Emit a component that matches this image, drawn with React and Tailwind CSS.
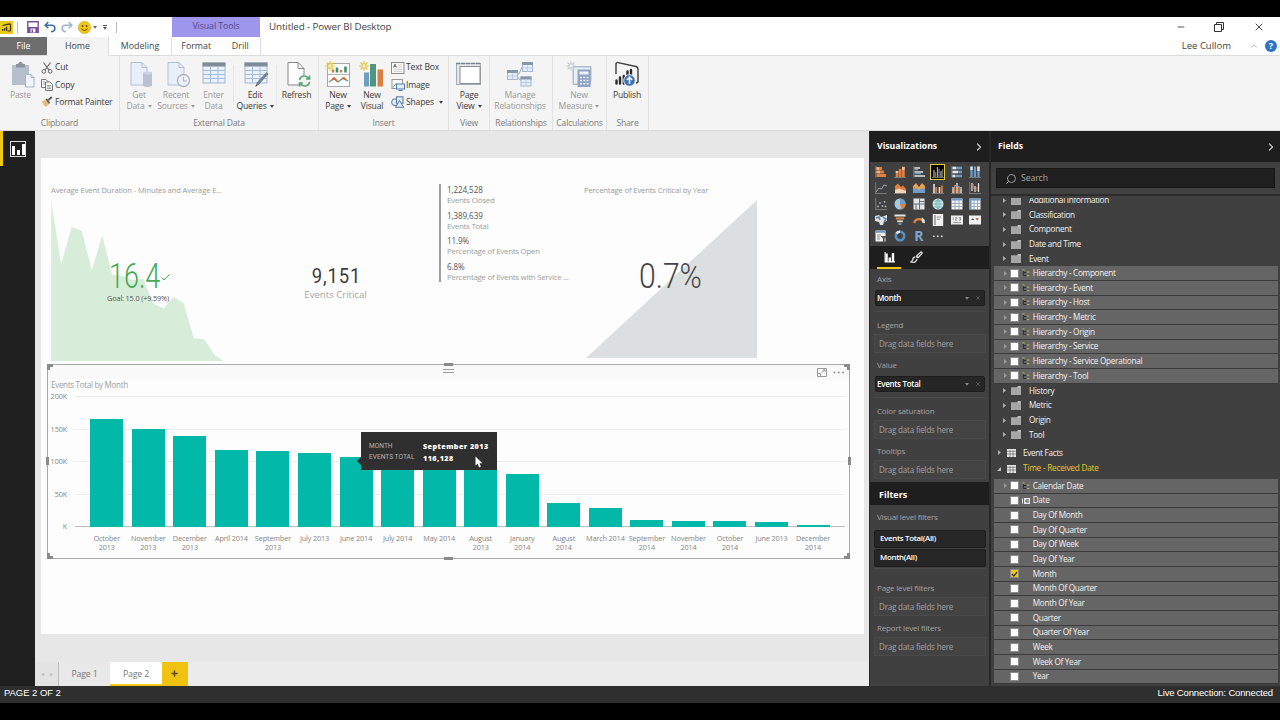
import { ChevronRight, ChevronUp, Search, Minus, X, Plus } from "lucide-react";

const months = [
  { label: "October 2013", top: 108.5, wrap: true },
  { label: "November 2013", top: 97.7, wrap: true },
  { label: "December 2013", top: 91.5, wrap: true },
  { label: "April 2014", top: 77 },
  { label: "September 2013", top: 75.7, wrap: true },
  { label: "July 2013", top: 73.7 },
  { label: "June 2014", top: 70.5 },
  { label: "July 2014", top: 68 },
  { label: "May 2014", top: 66 },
  { label: "August 2013", top: 64, wrap: true },
  { label: "January 2014", top: 53.5, wrap: true },
  { label: "August 2014", top: 24.5, wrap: true },
  { label: "March 2014", top: 19.5 },
  { label: "September 2014", top: 6.6, wrap: true },
  { label: "November 2014", top: 6.3, wrap: true },
  { label: "October 2014", top: 6.2, wrap: true },
  { label: "June 2013", top: 4.6 },
  { label: "December 2014", top: 1.8, wrap: true },
];

const fields = [
  { type: "folder", name: "Additional Information" },
  { type: "folder", name: "Classification" },
  { type: "folder", name: "Component" },
  { type: "folder", name: "Date and Time" },
  { type: "folder", name: "Event" },
  { type: "hierarchy", name: "Hierarchy - Component" },
  { type: "hierarchy", name: "Hierarchy - Event" },
  { type: "hierarchy", name: "Hierarchy - Host" },
  { type: "hierarchy", name: "Hierarchy - Metric" },
  { type: "hierarchy", name: "Hierarchy - Origin" },
  { type: "hierarchy", name: "Hierarchy - Service" },
  { type: "hierarchy", name: "Hierarchy - Service Operational" },
  { type: "hierarchy", name: "Hierarchy - Tool" },
  { type: "folder", name: "History" },
  { type: "folder", name: "Metric" },
  { type: "folder", name: "Origin" },
  { type: "folder", name: "Tool" },
];

const timeFields = [
  { type: "hierarchy", name: "Calendar Date" },
  { type: "key", name: "Date" },
  { type: "field", name: "Day Of Month" },
  { type: "field", name: "Day Of Quarter" },
  { type: "field", name: "Day Of Week" },
  { type: "field", name: "Day Of Year" },
  { type: "field", name: "Month", checked: true },
  { type: "field", name: "Month Of Quarter" },
  { type: "field", name: "Month Of Year" },
  { type: "field", name: "Quarter" },
  { type: "field", name: "Quarter Of Year" },
  { type: "field", name: "Week" },
  { type: "field", name: "Week Of Year" },
  { type: "field", name: "Year" },
];

/* ---------- quick access toolbar ---------- */

const LogoIcon = () => (
  <svg width="13" height="13" viewBox="0 0 13 13" className="shrink-0">
    <rect width="13" height="13" fill="#e9cb1c" />
    <path d="M2.5 4.5 L9.5 2.8 Q10.5 2.8 10.5 4 V9 Q10.5 10 9.5 10 H7.5" fill="none" stroke="#3a3208" strokeWidth="1.2" />
    <path d="M2.6 9.8 V8 M4.6 9.8 V7 M6.6 9.8 V5.8" stroke="#3a3208" strokeWidth="1.3" />
  </svg>
);

const SaveIcon = () => (
  <svg width="12" height="12" viewBox="0 0 12 12">
    <path d="M0.8 0.8 H11.2 V11.2 H0.8 Z" fill="#fff" stroke="#7b4fa0" strokeWidth="1.4" />
    <rect x="1" y="6" width="10" height="5.3" fill="#7b4fa0" />
    <rect x="3.6" y="7.6" width="4.8" height="3.8" fill="#fff" />
    <rect x="4.6" y="8.5" width="1.5" height="2.9" fill="#7b4fa0" />
  </svg>
);

const UndoIcon = ({ redo }) => (
  <svg width="12" height="12" viewBox="0 0 12 12" className={redo ? "-scale-x-100" : ""}>
    <path
      d="M4.3 1 L1.2 4.2 L4.3 7.2 M1.5 4.2 H7.4 Q10.9 4.2 10.9 7.3 Q10.9 10.6 7 10.8"
      fill="none"
      stroke={redo ? "#9fb4c8" : "#3a6ea5"}
      strokeWidth="1.6"
    />
  </svg>
);

const SmileIcon = () => (
  <svg width="13" height="13" viewBox="0 0 13 13">
    <circle cx="6.5" cy="6.5" r="6" fill="#f2c811" stroke="#d6a90c" strokeWidth="0.8" />
    <circle cx="4.5" cy="5" r="0.9" fill="#5a4200" />
    <circle cx="8.5" cy="5" r="0.9" fill="#5a4200" />
    <path d="M3.3 7.6 Q6.5 11.2 9.7 7.6" fill="none" stroke="#5a4200" strokeWidth="1" />
  </svg>
);

const Caret = ({ className = "" }) => (
  <svg width="4" height="3" viewBox="0 0 4 3" className={`inline-block shrink-0 ${className}`}>
    <path d="M0 0 H4 L2 2.8 Z" fill="currentColor" />
  </svg>
);

/* ---------- ribbon icons ---------- */

const PasteIcon = () => (
  <svg width="24" height="28" viewBox="0 0 24 28" className="ml-[5px]">
    <rect x="1" y="4" width="17" height="20" fill="#b5bfcd" />
    <path d="M5 3 H7 Q9.5 -1.5 12 3 H14 V6.5 H5 Z" fill="#8d939c" />
    <path d="M14.5 13.5 H20 L23 16.5 V26 H14.5 Z" fill="#f0f5fd" stroke="#9fb3d0" />
    <path d="M20 13.5 V16.5 H23" fill="none" stroke="#9fb3d0" />
  </svg>
);

const GetDataIcon = () => (
  <svg width="23" height="28" viewBox="0 0 23 28" className="ml-[5px]">
    <path d="M1 1.5 H12 L17 6.5 V24 H1 Z" fill="#e8effa" stroke="#b3bfd2" />
    <path d="M12 1.5 V6.5 H17" fill="none" stroke="#b3bfd2" />
    <path d="M13 12 Q17.5 9.5 22 12 V25 Q17.5 27 13 25 Z" fill="#b9c2d3" />
    <ellipse cx="17.5" cy="12" rx="4.5" ry="1.4" fill="#ccd4e2" />
  </svg>
);

const RecentIcon = () => (
  <svg width="24" height="28" viewBox="0 0 24 28" className="ml-[5px]">
    <path d="M1 1.5 H12 L17 6.5 V24 H1 Z" fill="#e8effa" stroke="#b3bfd2" />
    <path d="M12 1.5 V6.5 H17" fill="none" stroke="#b3bfd2" />
    <circle cx="16.5" cy="19.5" r="6" fill="#f0f2f6" stroke="#a9b3c2" strokeWidth="1.3" />
    <path d="M16.5 16 V20 H20" fill="none" stroke="#a9b3c2" strokeWidth="1.2" />
  </svg>
);

const TableIcon = ({ pencil }) => (
  <svg width="25" height="28" viewBox="0 0 25 28" className="ml-[2px]">
    <rect x="1" y="2" width="22" height="20" fill="#e9f1fc" stroke="#a3b7d2" />
    <rect x="0.5" y="1.5" width="23" height="4" fill="#808b98" />
    <path d="M1 9.5 H23 M1 13.5 H23 M1 17.5 H23 M8.5 5 V22 M16 5 V22" stroke="#a3bbdc" />
    {pencil && (
      <>
        <path d="M22.5 11 L24.5 13 L15 23.5 L11.5 25.5 L12.8 21.5 Z" fill="#76818d" />
        <path d="M12.2 23.5 L11.3 25.7 L13.4 24.8 Z" fill="#454b52" />
      </>
    )}
  </svg>
);

const RefreshIcon = () => (
  <svg width="24" height="28" viewBox="0 0 24 28" className="ml-[5px]">
    <path d="M1 1.5 H11 L17 7.5 V24 H1 Z" fill="#fff" stroke="#858585" />
    <path d="M11 1.5 V7.5 H17" fill="none" stroke="#858585" />
    <circle cx="17.5" cy="20" r="6" fill="#f3f3f3" />
    <path d="M12.5 19 Q13.5 15 17.5 15 Q20 15 21.5 17.3 M22.5 14.5 V18 H19" fill="none" stroke="#5ba577" strokeWidth="1.7" />
    <path d="M22.8 21 Q21.5 25 17.5 25 Q15 25 13.6 22.7 M12.5 25.5 V22 H16" fill="none" stroke="#5ba577" strokeWidth="1.7" />
  </svg>
);

const Sparkle = ({ faded }) => (
  <g stroke={faded ? "#c9cdd2" : "#e3c84f"} strokeWidth="1.1">
    <path d="M5 0 V10 M0 5 H10 M1.5 1.5 L8.5 8.5 M8.5 1.5 L1.5 8.5" />
    <circle cx="5" cy="5" r="2.2" fill={faded ? "#eceef1" : "#fbf3c4"} />
  </g>
);

const NewPageIcon = () => (
  <svg width="26" height="28" viewBox="0 0 26 28">
    <rect x="2.5" y="2.5" width="22" height="23" fill="#fff" stroke="#a9a9a9" />
    <path d="M3 13.5 H24" stroke="#b5b5b5" />
    <path d="M8 11.5 V8.5 M16 11.5 V9" stroke="#d07a3c" strokeWidth="2.4" />
    <path d="M12 11.5 V6.5 M20.5 11.5 V5.5" stroke="#3f9070" strokeWidth="2.6" />
    <path d="M4 21 L9 17.5 L13 21 L18 17 L23 20" fill="none" stroke="#4f9a83" strokeWidth="1.2" />
    <path d="M7 19 L9 17 L12 20 M17 18 L19 17 L21 19" fill="none" stroke="#cf6c3f" strokeWidth="1.8" />
    <Sparkle />
  </svg>
);

const NewVisualIcon = () => (
  <svg width="25" height="28" viewBox="0 0 25 28" className="-ml-[2px]">
    <rect x="5" y="11.5" width="5" height="14" fill="#6f9fc0" />
    <rect x="11" y="3" width="6" height="22.5" fill="#4f9580" />
    <rect x="18.5" y="8.5" width="5.5" height="17" fill="#d98045" />
    <Sparkle />
  </svg>
);

const PageViewIcon = () => (
  <svg width="26" height="28" viewBox="0 0 26 28">
    <rect x="0.5" y="2.5" width="24" height="21" fill="#e4e6e8" stroke="#a5acb3" />
    <rect x="4" y="5.5" width="20" height="17" fill="#fff" stroke="#868d94" />
    <path d="M0 2.5 H25" stroke="#7b858f" strokeWidth="1.5" strokeDasharray="4 1" />
  </svg>
);

const RelationshipsIcon = () => (
  <svg width="28" height="28" viewBox="0 0 28 28">
    <path d="M10 13 H13 L16 6 H19 M10 14 L14 19 H16" fill="none" stroke="#9caab8" />
    {[[16.5, 1.5], [1.5, 9.5], [15, 16]].map(([x, y]) => (
      <g key={x}>
        <rect x={x} y={y} width="10" height="9" fill="#e6eefa" stroke="#a0b6d4" />
        <rect x={x - 0.5} y={y - 0.5} width="11" height="3" fill="#8797aa" />
        <path d={`M${x} ${y + 5.5} H${x + 10} M${x + 5} ${y + 3} V${y + 9}`} stroke="#b9cbe3" />
      </g>
    ))}
  </svg>
);

const MeasureIcon = () => (
  <svg width="26" height="28" viewBox="0 0 26 28">
    <path d="M7 5.5 H25 V20 H17 M7 8 V23.5 H12" fill="none" stroke="#b2bccb" />
    <rect x="7.5" y="6" width="17" height="17" fill="#e9f0fa" stroke="#b2bccb" />
    <rect x="11.5" y="8.5" width="13" height="17.5" fill="#8fa3c4" />
    <rect x="13.5" y="10.5" width="9" height="3" fill="#f0f4fa" />
    <path d="M14 16.5 H22.5 M14 19.5 H22.5 M14 22.8 H22.5" stroke="#e9f0fa" strokeWidth="1.6" strokeDasharray="2 1.3" />
    <Sparkle faded />
  </svg>
);

const PublishIcon = () => (
  <svg width="26" height="28" viewBox="0 0 26 28">
    <path d="M2 13 V3 Q2 1.2 4 1.6 L22 5.5 Q24 6 24 8 V20 Q24 22 22 22" fill="none" stroke="#3e3e3e" strokeWidth="1.4" />
    <path d="M2.5 22.5 V19.5 M6 22.5 V16.5 M9.8 22.5 V15 M13.5 15 V10.5 M17 13 V9" stroke="#2b2b2b" strokeWidth="2.4" strokeLinecap="round" />
    <circle cx="15.5" cy="19.5" r="5.8" fill="#3d74b8" stroke="#f3f3f3" />
    <path d="M15.5 23 V16.5 M12.8 19 L15.5 16.3 L18.2 19" fill="none" stroke="#fff" strokeWidth="1.5" />
  </svg>
);

const CutIcon = () => (
  <svg width="12" height="12" viewBox="0 0 12 12" fill="none" stroke="#666">
    <path d="M2.5 0.5 L8 8 M9.5 0.5 L4 8" strokeWidth="1.2" />
    <circle cx="2.8" cy="9.4" r="1.8" />
    <circle cx="9.2" cy="9.4" r="1.8" />
  </svg>
);

const CopyIcon = () => (
  <svg width="12" height="12" viewBox="0 0 12 12" fill="#f8f8f8" stroke="#777">
    <path d="M0.5 0.5 H5 L7 2.5 V8.5 H0.5 Z" />
    <path d="M4.5 3 H9 L11.5 5.5 V11.5 H4.5 Z" />
    <path d="M6 6.5 H10 M6 8 H10 M6 9.6 H10 M2 3 H4 M2 5 H4" strokeWidth="0.7" />
  </svg>
);

const PainterIcon = () => (
  <svg width="12" height="12" viewBox="0 0 12 12">
    <path d="M1 5.5 L4.5 3.5 L8 8 L5 11 Q2 9.5 1 5.5 Z" fill="#e8bd7a" />
    <path d="M4.5 3.5 L6 2.5 L9 6.5 L8 8 Z" fill="#555" />
    <path d="M7.5 4 L10.8 1" stroke="#555" strokeWidth="1.8" />
  </svg>
);

const TextBoxIcon = () => (
  <svg width="14" height="12" viewBox="0 0 14 12">
    <rect x="0.5" y="0.5" width="12.5" height="11" fill="#fafafa" stroke="#8c8c8c" />
    <path d="M2.5 5.5 L4 2 L5.5 5.5 M3 4.4 H5" fill="none" stroke="#555" strokeWidth="0.8" />
    <path d="M7 3 H11 M7 5 H11 M2.5 7.3 H11 M2.5 9.3 H11" stroke="#c5c5c5" strokeWidth="0.8" />
  </svg>
);

const ImageIcon = () => (
  <svg width="14" height="12" viewBox="0 0 14 12">
    <rect x="1" y="0.5" width="10.5" height="9" fill="#fafafa" stroke="#9a9a9a" />
    <path d="M2 8.5 L5 4.5 L7 7 L9 5" fill="none" stroke="#888" />
    <rect x="5.5" y="5" width="8" height="5" fill="#e5effa" stroke="#4b7fb5" />
    <path d="M7.5 11.5 H11.5" stroke="#4b7fb5" />
  </svg>
);

const ShapesIcon = () => (
  <svg width="14" height="12" viewBox="0 0 14 12" fill="#dfeaf6" stroke="#55799f">
    <circle cx="4" cy="6.2" r="3.4" />
    <rect x="5.5" y="0.8" width="6.5" height="6.5" />
    <path d="M8.5 4.5 L12.8 11.3 H4.5 Z" />
  </svg>
);

/* ---------- visualization gallery ---------- */

const O = "#e0803c";
const B = "#6f9cc4";
const W = "#e4e4e4";
const axis = <path d="M0.8 0 V11.5" stroke="#8a8a8a" strokeWidth="0.8" />;
const baseline = <path d="M0 11.5 H12" stroke="#8a8a8a" strokeWidth="0.8" />;

const gallery = [
  <>{axis}<path d="M1.5 2.5 H7 M1.5 6 H9 M1.5 9.5 H11" stroke={O} strokeWidth="2.8" /><path d="M1.5 2.5 H4 M1.5 6 H5" stroke="#f0b48a" strokeWidth="2.4" /></>,
  <>{baseline}<path d="M3 11 V5 M6.2 11 V3 M9.4 11 V0.8" stroke={O} strokeWidth="2.7" /><path d="M3 7 V5 M9.4 4 V1" stroke="#f3c7a6" strokeWidth="2.3" /></>,
  <>{axis}<path d="M1.5 2 H7 M1.5 6 H10 M1.5 10 H12" stroke={W} strokeWidth="1.6" /><path d="M1.5 3.5 H5 M1.5 7.5 H8" stroke={B} strokeWidth="1.4" /></>,
  <>{baseline}<path d="M2 11 V4 M5.5 11 V1 M9 11 V5" stroke="#aaa" strokeWidth="1.3" /><path d="M3.6 11 V6 M7.1 11 V3 M10.6 11 V3" stroke="#666" strokeWidth="1.3" /></>,
  <>{axis}<path d="M1.5 2 H11 M1.5 6 H11 M1.5 10 H11" stroke={B} strokeWidth="2.4" /><path d="M1.5 2 H5 M1.5 6 H7 M1.5 10 H4" stroke={W} strokeWidth="2.4" /></>,
  <>{baseline}<path d="M2.5 11 V0.5 M6 11 V0.5 M9.5 11 V0.5" stroke={B} strokeWidth="2.3" /><path d="M2.5 4 V0.5 M9.5 5 V0.5" stroke={W} strokeWidth="2.3" /></>,
  <>{axis}{baseline}<path d="M1 10 L4 6 L6.5 7 L9 3 L12 4" fill="none" stroke="#a7b1bb" strokeWidth="0.9" /></>,
  <>{baseline}<path d="M1 11 V4 L4 1.5 L7 5 L9 3.5 L12 7 V11 Z" fill={O} /><path d="M1 11 V8 L5 6.5 L12 9 V11 Z" fill="#f4d3b8" /></>,
  <><path d="M0 11 V4 L3 1 L6 5 L9 1 L12 4 V11 Z" fill="#e8a052" /><path d="M0 11 V7 Q3 5 6 8 Q9 5 12 7 V11 Z" fill={B} /></>,
  <>{baseline}<path d="M2 11 V2 M7.5 11 V5" stroke={W} strokeWidth="1.6" /><path d="M4.2 11 V5 M10 11 V3.5" stroke={O} strokeWidth="1.7" /></>,
  <>{baseline}<path d="M2 11 V5 M6 11 V1 M10 11 V5" stroke={W} strokeWidth="1.4" /><path d="M3.7 11 V3 M8 11 V4" stroke={O} strokeWidth="1.5" /><path d="M1 7 L5 3 L11 7" fill="none" stroke={B} /></>,
  <>{axis}{baseline}<path d="M3 9 V1 M6 10 V4 M9.5 10 V1" stroke={W} strokeWidth="1.2" /><path d="M4.2 2 V7 M8 5 V9" stroke="#c8624c" strokeWidth="1.2" /></>,
  <>{axis}{baseline}<g fill="#a9b4be"><circle cx="3" cy="8.5" r="0.9" /><circle cx="5" cy="5" r="0.9" /><circle cx="7.5" cy="8" r="0.9" /><circle cx="9.5" cy="4" r="0.9" /><circle cx="10.5" cy="8.5" r="0.9" /></g></>,
  <><circle cx="6" cy="6" r="5.5" fill="#a9c6e0" /><path d="M6 6 V0.5 A5.5 5.5 0 0 1 11.5 6 Z" fill={B} /><path d="M6 6 H11.5 A5.5 5.5 0 0 1 7.5 11.3 Z" fill={O} /></>,
  <><rect x="0.5" y="0.5" width="11" height="11" fill={W} /><path d="M6.5 0.5 V11.5 M0.5 6 H11.5 M3 6 V11.5 M6.5 3.5 H11.5" stroke="#65717d" /></>,
  <><circle cx="6" cy="6" r="5.5" fill="#d9ecec" /><path d="M0.5 6 H11.5 M6 0.5 V11.5 M6 0.5 Q1.5 6 6 11.5 M6 0.5 Q10.5 6 6 11.5 M1.5 3 H10.5 M1.5 9 H10.5" fill="none" stroke="#5fa7ac" strokeWidth="0.7" /></>,
  <><rect x="0.5" y="0.5" width="11" height="11" fill="#f1f1f1" /><path d="M0.5 1.5 H11.5" stroke={B} strokeWidth="2" /><path d="M0.5 5.5 H11.5 M0.5 8.5 H11.5 M4 2 V11.5 M8 2 V11.5" stroke="#8ea2b6" strokeWidth="0.8" /></>,
  <><rect x="0.5" y="0.5" width="11" height="11" fill="#f1f1f1" /><path d="M0.5 1.5 H11.5 M1.5 1 V11.5" stroke={B} strokeWidth="2" /><path d="M0.5 5.5 H11.5 M0.5 8.5 H11.5 M5 2 V11.5 M8.5 2 V11.5" stroke="#8ea2b6" strokeWidth="0.8" /></>,
  <><path d="M0 2 L4 1 L6 3 L12 1 V7 L9 8 L8 11 H5 L4 8 L0 7 Z" fill={W} /><path d="M1 4 L4 3 L5 6 M8 3 L11 5 L9 8" fill="none" stroke="#4f87ba" strokeWidth="1.6" /></>,
  <><path d="M0.5 1.5 H11.5" stroke={W} strokeWidth="2" /><path d="M1.8 4.5 H10.2" stroke={O} strokeWidth="2" /><path d="M3.2 7.3 H8.8" stroke={W} strokeWidth="1.8" /><path d="M4.6 10 H7.4" stroke={B} strokeWidth="2" /></>,
  <><path d="M1.3 9 A4.8 4.8 0 0 1 10.7 9" fill="none" stroke={O} strokeWidth="2.4" /><path d="M8.6 4.5 A4.8 4.8 0 0 1 10.7 9" fill="none" stroke={W} strokeWidth="2.4" /></>,
  <><rect x="0.8" y="0" width="10.4" height="12" fill="#f1f1f1" /><path d="M3 1 V11" stroke="#666" /><path d="M4.8 3 H9 M4.8 5.2 H8" stroke="#888" strokeWidth="0.9" /></>,
  <><rect x="0" y="1.5" width="12" height="9" fill="#f1f1f1" /><path d="M2.2 3.2 V6.2 M4.2 3.5 H5.8 V4.8 H4.3 V6.2 H6 M7.8 3.5 H9.6 V6.2 H7.8 M8.3 4.8 H9.5 M2 8.6 H10" fill="none" stroke="#7a7a7a" strokeWidth="0.7" /></>,
  <><rect x="0" y="1.5" width="12" height="9" fill="#f1f1f1" /><path d="M2 6 L3.8 4.2 L5.6 6 Z" fill="#555" /><path d="M6.5 4.2 H10 L8.2 6.5 Z" fill="#c0453a" /></>,
  <><rect x="0.5" y="0.5" width="10" height="11" fill="#f1f1f1" /><path d="M0.5 1.8 H10.5" stroke={B} strokeWidth="2" /><path d="M2 5 H6 M2 7 H5 M2 9 H5" stroke="#888" strokeWidth="0.9" /><path d="M5.5 6 H12 L9.6 8.8 V12 H8 V8.8 Z" fill="#555" /></>,
  <><circle cx="6" cy="6" r="4.2" fill="none" stroke="#5b8fc0" strokeWidth="2.6" /><path d="M2.5 3.6 A4.2 4.2 0 0 1 6 1.8" fill="none" stroke={W} strokeWidth="2.6" /></>,
];

const BarsGlyph = ({ size = 12 }) => (
  <svg width={size} height={size} viewBox="0 0 12 12">
    <path d="M1.2 0 V10.8 H12" fill="none" stroke="#eee" strokeWidth="1.2" />
    <path d="M2.8 11 V1.5 M6.3 11 V6 M9.8 11 V1" stroke="#fff" strokeWidth="2.6" />
  </svg>
);

const BrushGlyph = () => (
  <svg width="13" height="13" viewBox="0 0 13 13" fill="none" stroke="#ddd">
    <path d="M6.5 5 L10.8 1 Q12.3 0.8 12 2.4 L8 6.8" strokeWidth="1.3" />
    <path d="M6.2 5 L8 7" strokeWidth="1.8" />
    <path d="M5.2 6 Q2.6 6.5 2.7 9 Q2 10.3 0.8 11 Q5.8 12.6 7 8" strokeWidth="1.3" />
  </svg>
);

/* ---------- ribbon ---------- */

const BigButton = ({ icon, lines, caret, disabled, width }) => (
  <div className={`flex flex-col items-center ${width} ${disabled ? "text-[#9a9a9a]" : "text-[#3b3b3b]"}`}>
    <div className="h-[29px] flex items-start justify-center">{icon}</div>
    {lines.map((line, i) => (
      <div key={line} className="h-[11px] leading-[11px] whitespace-nowrap flex items-center">
        {line}
        {caret && i === lines.length - 1 && <Caret className="ml-[3px]" />}
      </div>
    ))}
  </div>
);

const SmallButton = ({ icon, label, caret }) => (
  <div className="h-[17.3px] flex items-center gap-px text-[#3b3b3b] whitespace-nowrap">
    <span className="w-[14px] flex justify-center">{icon}</span>
    {label}
    {caret && <Caret className="ml-1" />}
  </div>
);

const RibbonGroup = ({ label, width, children }) => (
  <div className={`${width} flex flex-col border-r border-[#e2e2e2] pt-[5px] pb-px`}>
    <div className="flex flex-1">{children}</div>
    <div className="h-3 leading-3 text-center text-[#7c7c7c]">{label}</div>
  </div>
);

const Ribbon = () => (
  <div className="h-[76px] bg-[#f4f4f4] border-t border-b border-[#dcdcdc] flex text-[8.6px] tracking-[-0.18px]">
    <RibbonGroup label="Clipboard" width="w-[120px]">
      <BigButton icon={<PasteIcon />} lines={["Paste"]} disabled width="w-[41px]" />
      <div className="-ml-px -mt-[2px]">
        <SmallButton icon={<CutIcon />} label="Cut" />
        <SmallButton icon={<CopyIcon />} label="Copy" />
        <SmallButton icon={<PainterIcon />} label="Format Painter" />
      </div>
    </RibbonGroup>
    <RibbonGroup label="External Data" width="w-[199px]">
      <BigButton icon={<GetDataIcon />} lines={["Get", "Data"]} caret disabled width="w-[38px]" />
      <BigButton icon={<RecentIcon />} lines={["Recent", "Sources"]} caret disabled width="w-[36px]" />
      <BigButton icon={<TableIcon />} lines={["Enter", "Data"]} disabled width="w-[39px]" />
      <div className="w-px h-10 mt-1 bg-[#e6e6e6]" />
      <BigButton icon={<TableIcon pencil />} lines={["Edit", "Queries"]} caret width="w-[42px]" />
      <div className="w-px h-10 mt-1 bg-[#e6e6e6]" />
      <BigButton icon={<RefreshIcon />} lines={["Refresh"]} width="w-[39px]" />
    </RibbonGroup>
    <RibbonGroup label="Insert" width="w-[130px]">
      <BigButton icon={<NewPageIcon />} lines={["New", "Page"]} caret width="w-[38px]" />
      <BigButton icon={<NewVisualIcon />} lines={["New", "Visual"]} width="w-[30px]" />
      <div className="ml-[4px] -mt-[2px]">
        <SmallButton icon={<TextBoxIcon />} label="Text Box" />
        <SmallButton icon={<ImageIcon />} label="Image" />
        <SmallButton icon={<ShapesIcon />} label="Shapes" caret />
      </div>
    </RibbonGroup>
    <RibbonGroup label="View" width="w-[41px]">
      <BigButton icon={<PageViewIcon />} lines={["Page", "View"]} caret width="w-[40px]" />
    </RibbonGroup>
    <RibbonGroup label="Relationships" width="w-[63px]">
      <BigButton icon={<RelationshipsIcon />} lines={["Manage", "Relationships"]} disabled width="w-[60px]" />
    </RibbonGroup>
    <RibbonGroup label="Calculations" width="w-[54px]">
      <BigButton icon={<MeasureIcon />} lines={["New", "Measure"]} caret disabled width="w-[52px]" />
    </RibbonGroup>
    <RibbonGroup label="Share" width="w-[42px]">
      <BigButton icon={<PublishIcon />} lines={["Publish"]} width="w-[40px]" />
    </RibbonGroup>
  </div>
);

const TitleBar = () => (
  <div className="h-[20px] bg-white flex items-center text-[10px] text-[#444]">
    <LogoIcon />
    <div className="w-px h-[11px] bg-[#bbb] ml-[4px] mr-[9px]" />
    <SaveIcon />
    <div className="ml-[5px]"><UndoIcon /></div>
    <div className="ml-[5px]"><UndoIcon redo /></div>
    <div className="ml-[5px]"><SmileIcon /></div>
    <Caret className="ml-[2px] mr-[6px] text-[#666]" />
    <div className="flex flex-col items-center gap-px text-[#555]">
      <div className="w-[4px] h-px bg-[#555]" />
      <Caret />
    </div>
    <div className="w-px h-[11px] bg-[#bbb] ml-[9px]" />
    <div className="w-[88px] h-full bg-[#9d96ec] ml-[55px] flex items-center justify-center text-[8.8px] tracking-[-0.1px] text-[#514a86]">
      Visual Tools
    </div>
    <div className="ml-[9px] tracking-[-0.12px] text-[9.8px]">Untitled - Power BI Desktop</div>
    <div className="ml-auto flex items-center text-[#333]">
      <Minus size={10} strokeWidth={2} className="mr-[28px]" />
      <svg width="10" height="10" viewBox="0 0 10 10" fill="none" stroke="#333" className="mr-[29px]">
        <path d="M0.5 2.5 H7.5 V9.5 H0.5 Z M2.5 2.5 V0.5 H9.5 V7.5 H7.5" />
      </svg>
      <X size={12} strokeWidth={1.8} className="mr-[15px]" />
    </div>
  </div>
);

const TabRow = () => (
  <div className="h-[18px] bg-white flex items-center text-[8.9px] text-[#444]">
    <div className="w-[47px] h-full bg-[#6e6e6e] text-white flex items-center justify-center">File</div>
    <div className="w-[62px] h-[19px] bg-[#f4f4f4] border-r border-[#dcdcdc] flex items-center justify-center">Home</div>
    <div className="w-[62px] text-center">Modeling</div>
    <div className="w-[90px] h-full flex items-center border-l border-r border-[#dcd9f5]">
      <span className="w-[49px] text-center">Format</span>
      <span className="w-[40px] text-center">Drill</span>
    </div>
    <div className="ml-auto flex items-center">
      <span className="text-[9.5px]">Lee Cullom</span>
      <ChevronUp size={10} strokeWidth={1.5} className="ml-[18px] text-[#888]" />
      <span className="ml-[6px] mr-[3px] w-[12px] h-[12px] rounded-full bg-[#2b74c4] text-white font-bold text-[9px] leading-[12px] text-center">
        ?
      </span>
    </div>
  </div>
);

/* ---------- report canvas ---------- */

const DurationKpi = () => (
  <div className="w-[177px] pt-[26px] text-[7.6px]">
    <div className="h-[13px] leading-[13px] text-[#9b9b9b] whitespace-nowrap tracking-[-0.12px]">
      Average Event Duration - Minutes and Average E...
    </div>
    <div className="grid mt-[4px]">
      <svg width="173" height="160" viewBox="154 212 518 480" className="[grid-area:1/1]">
        <path
          fill="#d7edd9"
          d="M154 212 L184 402 L215 290 L246 302 L276 420 L307 315 L337 433 L370 437 L400 450 L430 445 L460 520 L492 534 L521 500 L551 518 L582 624 L613 627 L645 675 L672 692 H154 Z"
        />
      </svg>
      <div className="[grid-area:1/1] pt-[60px]">
        <div className="flex items-center h-[32px] pl-[58px]">
          <div className="w-[52px] font-[Roboto] font-light text-[35px] leading-[32px] text-[#45a854]">
            <div className="origin-left scale-x-[0.77] whitespace-nowrap">16.4</div>
          </div>
          <svg width="9" height="7" viewBox="0 0 9 7">
            <path d="M0.5 3.5 L3 6 L8.5 0.5" fill="none" stroke="#45a854" />
          </svg>
        </div>
        <div className="leading-[10px] pr-[3px] text-center text-[#555] text-[7.3px] tracking-[-0.15px]">Goal: 15.0 (+9.59%)</div>
      </div>
    </div>
  </div>
);

const cardRows = [
  ["1,224,528", "Events Closed"],
  ["1,389,639", "Events Total"],
  ["11.9%", "Percentage of Events Open"],
  ["6.8%", "Percentage of Events with Service ..."],
];

const MultiRowCard = () => (
  <div className="w-[136px] h-[98px] mt-[26px] border-l-2 border-[#a0a0a0] pl-[6px] text-[8.1px] whitespace-nowrap">
    {cardRows.map(([value, label]) => (
      <div key={label} className="h-[25.7px]">
        <div className="leading-[11px] tracking-[-0.1px] text-[#555]">{value}</div>
        <div className="leading-[11px] tracking-[-0.26px] text-[#a0a0a0] text-[7.9px]">{label}</div>
      </div>
    ))}
  </div>
);

const CriticalKpi = () => (
  <div className="w-[180px] pt-[26px] text-[7.7px]">
    <div className="h-[13px] leading-[13px] tracking-[-0.16px] text-[#9b9b9b] whitespace-nowrap">
      Percentage of Events Critical by Year
    </div>
    <div className="grid mt-[3px]">
      <svg width="174" height="158" viewBox="0 0 174 158" className="[grid-area:1/1]">
        <path d="M2 158 L173 0 V158 Z" fill="#dcdfe0" />
      </svg>
      <div className="[grid-area:1/1] pt-[57.5px] pl-[55px] font-[Roboto] font-light text-[35px] leading-[38px] text-[#444]">
        <div className="origin-left scale-x-[0.86] whitespace-nowrap">0.7%</div>
      </div>
    </div>
  </div>
);

const axisLabels = ["200K", "150K", "100K", "50K", "K"];

const Tooltip = () => (
  <div className="absolute left-[313px] top-[67px] w-[136px] h-[38px] bg-[#2f2f2f] px-2 pt-[9px]">
    <div className="absolute -left-[4px] top-[25px] border-y-4 border-r-4 border-y-transparent border-r-[#2f2f2f]" />
    <div className="flex items-center h-[11.5px]">
      <span className="w-[54px] shrink-0 font-[Roboto] text-[6.6px] text-[#b5b5b5]">MONTH</span>
      <span className="font-extrabold text-[7.2px] tracking-[0.45px] text-white whitespace-nowrap">September 2013</span>
    </div>
    <div className="flex items-center h-[11.5px]">
      <span className="w-[54px] shrink-0 font-[Roboto] text-[6.6px] text-[#b5b5b5]">EVENTS TOTAL</span>
      <span className="font-extrabold text-[7.2px] tracking-[0.45px] text-white">116,128</span>
    </div>
    <svg width="8" height="12" viewBox="0 0 8 12" className="absolute left-[114px] top-[24px]">
      <path d="M0.5 0.5 V9.6 L2.6 7.8 L4.2 11.4 L5.9 10.6 L4.4 7.2 H7.4 Z" fill="#fff" />
    </svg>
  </div>
);

const EventsChart = () => (
  <div className="relative ml-[6px] w-[803px] h-[195px] border border-[#a8a8a8] text-[7.3px] text-[#858585]">
    <div className="h-[14px] bg-[#f9f9f9] flex items-center justify-end pr-[4px] gap-[6px]">
      <svg width="10" height="9" viewBox="0 0 10 9" fill="none" stroke="#8f8f8f" strokeWidth="0.9">
        <path d="M0.5 0.5 H9.5 V8.5 H0.5 Z M0.5 5.5 H3.5 V8.5 M4.5 4.5 L8 1.8 M6 1.8 H8 V3.8" />
      </svg>
      <svg width="12" height="3" viewBox="0 0 12 3" fill="#8f8f8f">
        <circle cx="1.5" cy="1.5" r="1" />
        <circle cx="5.8" cy="1.5" r="1" />
        <circle cx="10" cy="1.5" r="1" />
      </svg>
    </div>
    <div className="pl-[3px] h-[11px] leading-[11px] text-[8.1px] tracking-[-0.33px] text-[#a0a0a0]">Events Total by Month</div>
    <div className="flex">
      <div className="w-[19px] h-[144px] flex flex-col text-right tracking-[-0.15px]">
        {axisLabels.map((label) => (
          <div key={label} className="h-[32.6px] shrink-0 leading-[12px]">{label}</div>
        ))}
      </div>
      <div className="grid ml-[8px] w-[770px] pt-[6px]">
        <div className="[grid-area:1/1] h-[131px] flex flex-col justify-between">
          {axisLabels.map((label) => (
            <div key={label} className={`h-px ${label === "K" ? "bg-[#bdbdbd]" : "bg-[#ececec]"}`} />
          ))}
        </div>
        <div className="[grid-area:1/1] pl-[11px]">
          <div className="h-[131px] flex items-end">
            {months.map((m) => (
              <div key={m.label} className="w-[41.55px] flex justify-center">
                <div className="w-[33px] bg-[#02b8a8]" style={{ height: m.top }} />
              </div>
            ))}
          </div>
          <div className="flex mt-[7px]">
            {months.map((m) => (
              <div key={m.label} className="w-[41.55px] shrink-0 text-center leading-[9.4px] tracking-[-0.15px]">
                {m.wrap ? m.label.split(" ").map((w) => <div key={w}>{w}</div>) : <div className="whitespace-nowrap">{m.label}</div>}
              </div>
            ))}
          </div>
        </div>
      </div>
    </div>

    <Tooltip />

    {/* drag and resize handles */}
    <div className="absolute left-[395px] top-[4px] w-[11px] h-[4px] border-y border-[#a0a0a0]" />
    <div className="absolute -left-px -top-px w-[6px] h-[6px] border-l-[3px] border-t-[3px] border-[#8a8a8a]" />
    <div className="absolute -right-px -top-px w-[6px] h-[6px] border-r-[3px] border-t-[3px] border-[#8a8a8a]" />
    <div className="absolute -left-px -bottom-px w-[6px] h-[6px] border-l-[3px] border-b-[3px] border-[#8a8a8a]" />
    <div className="absolute -right-px -bottom-px w-[6px] h-[6px] border-r-[3px] border-b-[3px] border-[#8a8a8a]" />
    <div className="absolute left-[396px] -top-[2px] w-[9px] h-[3px] bg-[#8a8a8a]" />
    <div className="absolute left-[396px] -bottom-[2px] w-[9px] h-[3px] bg-[#8a8a8a]" />
    <div className="absolute -left-[2px] top-[92px] w-[3px] h-[8px] bg-[#8a8a8a]" />
    <div className="absolute -right-[2px] top-[92px] w-[3px] h-[8px] bg-[#8a8a8a]" />
  </div>
);

const ReportCanvas = () => (
  <div className="w-[834px] bg-[#e7e7e7] flex flex-col">
    <div className="mt-[27px] ml-[6px] w-[823px] h-[476px] bg-[#fdfdfd]">
      <div className="h-[206px] pl-[10px] flex">
        <DurationKpi />
        <div className="ml-[67px] w-[80px] pt-[107px] text-center">
          <div className="font-[Roboto] text-[20.5px] leading-[22px] text-[#3c3c3c] pl-[3px]">
            <div className="scale-x-[0.9] tracking-[1px]">9,151</div>
          </div>
          <div className="text-[9.7px] tracking-[-0.05px] leading-[15px] pl-px text-[#a6a6a6]">Events Critical</div>
        </div>
        <div className="w-[64px]" />
        <MultiRowCard />
        <div className="w-[9px]" />
        <CriticalKpi />
      </div>
      <EventsChart />
    </div>
    <div className="mt-auto h-[24px] bg-[#ececec] flex text-[8.7px] text-[#777]">
      <div className="w-[23px] bg-[#e3e3e3] flex items-center justify-center gap-[6px] text-[#bbb] text-[6px]">
        <span>◂</span>
        <span>▸</span>
      </div>
      <div className="w-[52px] bg-[#e9e9e9] border-l border-[#bdbdbd] flex items-center justify-center pt-px tracking-[-0.15px]">Page 1</div>
      <div className="w-[52px] bg-white border-b-2 border-[#f2c811] flex items-center justify-center pt-[3px] tracking-[-0.15px]">Page 2</div>
      <div className="w-[26px] bg-[#efc310] flex items-center justify-center pr-[2px] pb-px text-[#5b4c10]">
        <Plus size={9} strokeWidth={4} />
      </div>
    </div>
  </div>
);

/* ---------- visualizations pane ---------- */

const Well = ({ label, children, className = "" }) => (
  <div className={className}>
    <div className="pl-[7px] h-[12px] leading-[12px] text-[#a3a3a3] text-[8px] tracking-[-0.18px]">{label}</div>
    {children}
  </div>
);

const DropBox = () => (
  <div className="mt-[3px] ml-[4px] mr-[3px] h-[19px] leading-[18px] pl-[4px] border border-[#4a4a4a] bg-[#434343] text-[#a0a0a0] text-[8.1px] tracking-[-0.22px]">
    Drag data fields here
  </div>
);

const Chip = ({ label }) => (
  <div className="h-[16px] rounded-[2px] bg-[#262626] border border-[#1d1d1d] flex items-center pl-px pr-[3px] text-white font-semibold text-[8px] tracking-[-0.3px]">
    {label}
    <Caret className="ml-auto mr-[6px] text-[#888]" />
    <X size={6} strokeWidth={2.5} className="text-[#777]" />
  </div>
);

const ChipBox = ({ label }) => (
  <div className="mt-[5px] ml-[4px] mr-[3px] h-[22px] border-b border-[#4a4a4a] px-px">
    <Chip label={label} />
  </div>
);

const VisualizationsPane = () => (
  <div className="w-[120px] bg-[#404040] border-l border-[#2b2b2b]">
    <div className="h-[31px] bg-[#1e1e1e] pt-px pl-[7px] pr-[4px] flex items-center justify-between text-white font-bold text-[8.7px]">
      Visualizations
      <ChevronRight size={12} strokeWidth={2.4} className="text-[#ccc]" />
    </div>
    <div className="h-[84px] pt-[2px] pl-[2px] grid grid-cols-[repeat(6,18.8px)] auto-rows-[16px]">
      {gallery.map((shape, i) => (
        <div
          key={i}
          className={`flex items-center justify-center ${i === 3 ? "bg-black border border-[#e3c93f] mx-[2px]" : ""}`}
        >
          <svg width="12" height="12" viewBox="0 0 12 12">{shape}</svg>
        </div>
      ))}
      <div className="flex items-center justify-center font-bold text-[14px] leading-[14px] text-[#7ba6d0]">R</div>
      <div className="flex items-center justify-center">
        <svg width="12" height="3" viewBox="0 0 12 3" fill="#ddd">
          <rect x="1" y="0.5" width="1.6" height="1.6" />
          <rect x="5" y="0.5" width="1.6" height="1.6" />
          <rect x="9" y="0.5" width="1.6" height="1.6" />
        </svg>
      </div>
    </div>
    <div className="h-[23px] bg-[#1e1e1e] flex pl-[7px]">
      <div className="w-[24px] border-b-2 border-[#f2c811] flex items-center justify-center pt-[2px]">
        <BarsGlyph size={11} />
      </div>
      <div className="w-[30px] flex items-center justify-center">
        <BrushGlyph />
      </div>
    </div>
    <Well label="Axis" className="mt-[4px]">
      <ChipBox label="Month" />
    </Well>
    <Well label="Legend" className="mt-[7px]"><DropBox /></Well>
    <Well label="Value" className="mt-[6px]">
      <ChipBox label="Events Total" />
    </Well>
    <Well label="Color saturation" className="mt-[7px]"><DropBox /></Well>
    <Well label="Tooltips" className="mt-[6px]"><DropBox /></Well>
    <div className="mt-[3px] h-[23px] bg-[#1e1e1e] pl-[9px] pt-[2px] flex items-center text-white font-bold text-[9px]">Filters</div>
    <Well label="Visual level filters" className="mt-[6px]">
      <div className="mt-[7px] ml-[4px] mr-[3px] border-b border-[#4a4a4a] pb-px">
        <div className="h-[18px] mb-px rounded-[2px] bg-[#262626] border border-[#1d1d1d] flex items-center pl-[5px] text-white font-semibold text-[7.9px] tracking-[-0.3px]">
          Events Total(All)
        </div>
        <div className="h-[18px] rounded-[2px] bg-[#262626] border border-[#1d1d1d] flex items-center pl-[5px] text-white font-semibold text-[7.9px] tracking-[-0.3px]">
          Month(All)
        </div>
      </div>
    </Well>
    <Well label="Page level filters" className="mt-[13px]"><DropBox /></Well>
    <Well label="Report level filters" className="mt-[6px]"><DropBox /></Well>
  </div>
);

/* ---------- fields pane ---------- */

const FolderIcon = () => (
  <svg width="10" height="9" viewBox="0 0 10 9">
    <path d="M0 1.2 H6 L7 0 H10 V9 H0 Z" fill="#a6a6a6" />
    <path d="M6.5 1.5 L7.3 0.6 H9.5 V1.5 Z" fill="#d8d8d8" />
  </svg>
);

const HierarchyIcon = () => (
  <svg width="8" height="8" viewBox="0 0 8 8">
    <path d="M1.5 1 V6.5 H4 M1.5 3.5 H4" fill="none" stroke="#2e2e2e" />
    <path d="M0.5 1 H2.5 M5 3.2 H7.3 M5 6.6 H7.3" stroke="#b5ad4a" strokeWidth="1.3" />
  </svg>
);

const KeyIcon = () => (
  <svg width="8" height="6" viewBox="0 0 8 6">
    <path d="M0 0.5 H1 V5.5 H0 Z M2 0 H8 V6 H2 Z" fill="#e6e6e6" />
    <path d="M4 2 H7 M4 4 H7 M4 2 V4" fill="none" stroke="#444" strokeWidth="0.9" />
  </svg>
);

const GridIcon = () => (
  <svg width="9" height="8" viewBox="0 0 9 8">
    <rect width="9" height="8" fill="#e6e6e6" />
    <path d="M0 2.3 H9 M0 5 H9 M3 1 V8 M6 1 V8" stroke="#777" strokeWidth="0.8" />
  </svg>
);

const Arrow = ({ dim }) => (
  <svg width="3" height="5" viewBox="0 0 3 5">
    <path d="M0 0 L3 2.5 L0 5 Z" fill={dim ? "#9a9a9a" : "#adadad"} />
  </svg>
);

const FieldRow = ({ item }) => {
  if (item.type === "folder") {
    return (
      <div className="h-[14.66px] flex items-center pl-[12px]">
        <span className="w-[8px] flex"><Arrow /></span>
        <span className="w-[18px] flex"><FolderIcon /></span>
        {item.name}
      </div>
    );
  }
  return (
    <div className="h-[14.66px] ml-[3px] mr-[2px] bg-[#656565] border-b border-[#3b3b3b] flex items-center pl-[10px]">
      <span className="w-[6px] flex">{item.type === "hierarchy" && <Arrow dim />}</span>
      <span
        className={`w-[9px] h-[9px] shrink-0 mr-[3px] border border-[#8a8a8a] flex items-center justify-center ${
          item.checked ? "bg-[#f2c811]" : "bg-white"
        }`}
      >
        {item.checked && (
          <svg width="7" height="6" viewBox="0 0 7 6">
            <path d="M0.8 3 L2.8 5 L6.2 1" fill="none" stroke="#333" strokeWidth="1.2" />
          </svg>
        )}
      </span>
      <span className="w-[10.7px] flex shrink-0">
        {item.type === "hierarchy" && <HierarchyIcon />}
        {item.type === "key" && <KeyIcon />}
      </span>
      {item.name}
    </div>
  );
};

const FieldsPane = () => (
  <div className="flex-1 min-w-0 bg-[#404040] border-l-2 border-[#282828] flex flex-col text-[8.2px] text-[#f2f2f2] whitespace-nowrap">
    <div className="h-[31px] bg-[#1e1e1e] pt-px pl-[7px] pr-[3px] flex items-center justify-between text-white font-bold text-[8.7px]">
      Fields
      <ChevronRight size={12} strokeWidth={2.4} className="text-[#ccc]" />
    </div>
    <div className="mt-[6px] ml-[5px] mr-[5px] h-[20px] bg-[#1f1f1f] border border-[#161616] flex items-center pt-px pl-[8px] gap-[4px] text-[#a8a8a8] text-[8.7px] tracking-[-0.1px]">
      <Search size={12} strokeWidth={1.8} className="-scale-x-100" />
      Search
    </div>
    <div className="mt-[6px] h-[2px] bg-[#2c2c2c]" />
    <div className="mt-[2px] flex-1 min-h-0 overflow-hidden font-medium tracking-[-0.29px]">
      <div className="-mt-[5px]">
        {fields.map((item) => (
          <FieldRow key={item.name} item={item} />
        ))}
        <div className="mt-[3px] h-[15.6px] flex items-center pl-[7px]">
          <span className="w-[9px] flex"><Arrow /></span>
          <span className="w-[16px] flex"><GridIcon /></span>
          Event Facts
        </div>
        <div className="h-[15.6px] mb-[2.7px] flex items-center pl-[6px] text-[#e8c62d] tracking-[-0.2px]">
          <span className="w-[10px] flex">
            <svg width="4" height="4" viewBox="0 0 4 4"><path d="M4 0 V4 H0 Z" fill="#bdbdbd" /></svg>
          </span>
          <span className="w-[16px] flex"><GridIcon /></span>
          Time - Received Date
        </div>
        {timeFields.map((item) => (
          <FieldRow key={item.name} item={item} />
        ))}
      </div>
    </div>
  </div>
);

export default function App() {
  return (
    <div className="w-[1280px] h-[720px] bg-black pt-[17px] overflow-hidden font-['Open_Sans','Noto_Sans',sans-serif]">
      <TitleBar />
      <TabRow />
      <Ribbon />
      <div className="h-[555px] flex">
        <div className="w-[35px] bg-[#1f1f1f]">
          <div className="h-[35px] border-l-[3px] border-[#f2c811] flex items-center pl-[7px]">
            <div className="w-[16px] h-[16px] border border-[#ddd] flex items-end justify-center pb-px gap-[2px]">
              <div className="w-[3px] h-[9px] bg-white" />
              <div className="w-[3px] h-[5px] bg-white" />
              <div className="w-[3px] h-[11px] bg-white" />
            </div>
          </div>
        </div>
        <ReportCanvas />
        <VisualizationsPane />
        <FieldsPane />
      </div>
      <div className="h-[17px] bg-[#2f2f2f] text-white font-['Liberation_Sans',sans-serif] text-[9.5px] flex items-center justify-between pl-[4px] pr-[7px] pb-[2px]">
        <span className="tracking-[-0.05px]">PAGE 2 OF 2</span>
        <span className="tracking-[-0.15px]">Live Connection: Connected</span>
      </div>
    </div>
  );
}
